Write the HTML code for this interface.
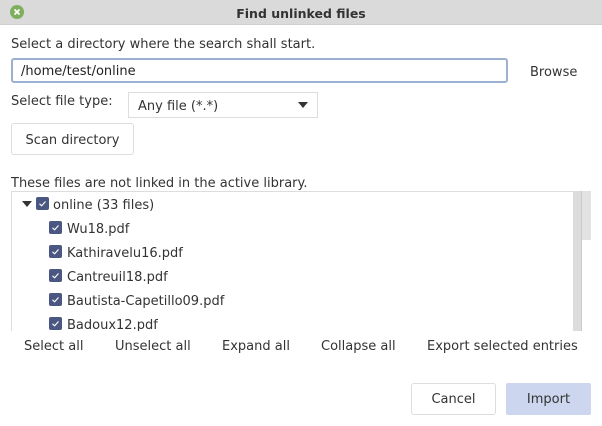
<!DOCTYPE html>
<html><head><style>
*{margin:0;padding:0;box-sizing:border-box}
body{width:602px;height:426px;background:#fff;font-family:"DejaVu Sans","Liberation Sans",sans-serif;font-size:13px;color:#333;position:relative;overflow:hidden}
.a{position:absolute;white-space:nowrap}
.cb{position:absolute;width:13px;height:13px;background:#4b5783;border-radius:2px}
.cb svg{position:absolute;left:0;top:0}
.row{position:absolute;height:20px;line-height:20px}
</style></head><body>
<div class="a" style="left:0;top:0;width:602px;height:25px;background:#dadada;border-bottom:1px solid #cfcfcf"></div>
<div class="a" style="left:10px;top:5px;width:14px;height:14px;border-radius:50%;background:#7fae5c"></div>
<svg class="a" style="left:10px;top:5px" width="14" height="14"><path d="M4.5 4.5L9.5 9.5M9.5 4.5L4.5 9.5" stroke="#fff" stroke-width="1.8"/></svg>
<div class="a" style="left:0;width:602px;top:6px;text-align:center;font-weight:bold;color:#333;font-size:12.5px">Find unlinked files</div>

<div class="a" style="left:11px;top:37px">Select a directory where the search shall start.</div>
<div class="a" style="left:11px;top:58px;width:497px;height:25px;border:2px solid #9cb0d2;border-radius:3px;padding-left:8px;line-height:23px;color:#222">/home/test/online</div>
<div class="a" style="left:530px;top:65px">Browse</div>

<div class="a" style="left:11px;top:94px">Select file type:</div>
<div class="a" style="left:128px;top:92px;width:190px;height:26px;border:1px solid #ddd;padding-left:9px;line-height:27px">Any file (*.*)</div>
<svg class="a" style="left:298px;top:101px" width="10" height="8"><path d="M0 1H10L5 7Z" fill="#333"/></svg>

<div class="a" style="left:11px;top:123px;width:123px;height:32px;border:1px solid #ddd;border-radius:3px;text-align:center;line-height:33px">Scan directory</div>

<div class="a" style="left:11px;top:176px">These files are not linked in the active library.</div>
<div class="a" style="left:11px;top:191px;width:571px;height:140px;border-top:1px solid #ddd;border-left:1px solid #ddd"></div>
<div class="a" style="left:573px;top:191px;width:9px;height:140px;background:#dcdcdc;border-right:1px solid #ccc"></div>
<div class="a" style="left:582px;top:191px;width:9px;height:49px;background:#e2e2e2"></div>

<svg class="a" style="left:22px;top:200px" width="10" height="8"><path d="M0 1H10L5 7Z" fill="#333"/></svg>
<div class="cb" style="left:36px;top:197px"><svg width="13" height="13"><path d="M3.5 6.8L5.6 8.8L9.5 4.5" stroke="#fff" stroke-width="1.1" fill="none"/></svg></div>
<div class="row" style="left:53px;top:196px">online (33 files)</div>

<div class="cb" style="left:49px;top:221px"><svg width="13" height="13"><path d="M3.5 6.8L5.6 8.8L9.5 4.5" stroke="#fff" stroke-width="1.1" fill="none"/></svg></div>
<div class="row" style="left:67px;top:220px">Wu18.pdf</div>
<div class="cb" style="left:49px;top:245px"><svg width="13" height="13"><path d="M3.5 6.8L5.6 8.8L9.5 4.5" stroke="#fff" stroke-width="1.1" fill="none"/></svg></div>
<div class="row" style="left:67px;top:244px">Kathiravelu16.pdf</div>
<div class="cb" style="left:49px;top:269px"><svg width="13" height="13"><path d="M3.5 6.8L5.6 8.8L9.5 4.5" stroke="#fff" stroke-width="1.1" fill="none"/></svg></div>
<div class="row" style="left:67px;top:268px">Cantreuil18.pdf</div>
<div class="cb" style="left:49px;top:293px"><svg width="13" height="13"><path d="M3.5 6.8L5.6 8.8L9.5 4.5" stroke="#fff" stroke-width="1.1" fill="none"/></svg></div>
<div class="row" style="left:67px;top:292px">Bautista-Capetillo09.pdf</div>
<div class="cb" style="left:49px;top:317px"><svg width="13" height="13"><path d="M3.5 6.8L5.6 8.8L9.5 4.5" stroke="#fff" stroke-width="1.1" fill="none"/></svg></div>
<div class="row" style="left:67px;top:316px;height:15px;overflow:hidden">Badoux12.pdf</div>

<div class="a" style="left:24px;top:339px">Select all</div>
<div class="a" style="left:115px;top:339px">Unselect all</div>
<div class="a" style="left:222px;top:339px">Expand all</div>
<div class="a" style="left:321px;top:339px">Collapse all</div>
<div class="a" style="left:427px;top:339px">Export selected entries</div>

<div class="a" style="left:411px;top:383px;width:85px;height:32px;border:1px solid #ddd;border-radius:3px;text-align:center;line-height:31px">Cancel</div>
<div class="a" style="left:506px;top:383px;width:85px;height:32px;background:#ccd6ee;border-radius:2px;text-align:center;line-height:33px">Import</div>
</body></html>
